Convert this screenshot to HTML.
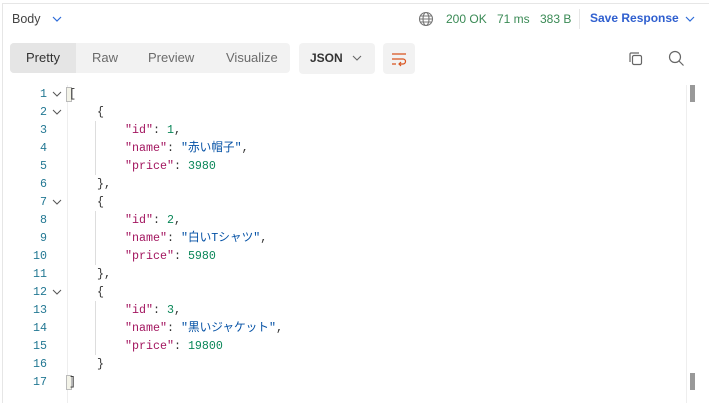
<!DOCTYPE html>
<html style="overflow:hidden"><head><meta charset="utf-8"><style>
html,body{margin:0;width:709px;height:403px;overflow:hidden}
body{background:#fff;font-family:"Liberation Sans","Noto Sans CJK JP",sans-serif;position:relative}
.a{position:absolute}
.frame{left:2px;top:3px;width:707px;height:400px;border-top:1px solid #e6e6e6;border-left:1px solid #e6e6e6;box-sizing:border-box}
.t{font-size:12.5px;white-space:nowrap}
.tabs{left:10px;top:43px;width:280px;height:30px;background:#f2f2f2;border-radius:4px}
.tab{position:absolute;top:0;height:30px;line-height:30px;font-size:13px;color:#6b6b6b}
.code{font-family:"Liberation Mono","Noto Sans CJK JP",monospace;font-size:11.67px;line-height:18px;white-space:pre}
.ln{left:20px;top:85px;width:27px;text-align:right;color:#237893}
.k{color:#a3155f}.s{color:#0451a5}.n{color:#098658}.p{color:#333}
</style></head><body>
<div class="a frame"></div>
<div class="a t" style="left:12px;top:12px;color:#444">Body</div>
<svg class="a" style="left:52px;top:15px" width="10" height="8"><path d="M1 2l4 4 4-4" fill="none" stroke="#2d6bd9" stroke-width="1.2"/></svg>
<svg class="a" style="left:418px;top:11px" width="16" height="16" viewBox="0 0 16 16" fill="none" stroke="#777" stroke-width="1.1"><circle cx="8" cy="8" r="6.5"/><ellipse cx="8" cy="8" rx="3" ry="6.5"/><path d="M1.5 8h13M2.5 5h11M2.5 11h11"/></svg>
<div class="a t" style="left:446px;top:12px;color:#3a8a55;font-size:12px">200 OK</div>
<div class="a t" style="left:497px;top:12px;color:#3a8a55;font-size:12px">71 ms</div>
<div class="a t" style="left:540px;top:12px;color:#3a8a55;font-size:12px">383 B</div>
<div class="a" style="left:579px;top:9px;width:1px;height:20px;background:#e6e6e6"></div>
<div class="a t" style="left:590px;top:11px;color:#2f5fcf;font-weight:bold;font-size:12px">Save Response</div>
<svg class="a" style="left:685px;top:15px" width="10" height="8"><path d="M1 2l4 4 4-4" fill="none" stroke="#2d6bd9" stroke-width="1.2"/></svg>

<div class="a tabs">
<div class="tab" style="left:0;width:66px;background:#e5e5e5;border-radius:4px 0 0 4px;color:#333;text-align:center">Pretty</div>
<div class="tab" style="left:82px">Raw</div>
<div class="tab" style="left:138px">Preview</div>
<div class="tab" style="left:216px">Visualize</div>
</div>
<div class="a" style="left:299px;top:43px;width:76px;height:31px;background:#f2f2f2;border-radius:4px"></div>
<div class="a t" style="left:310px;top:51px;font-weight:bold;color:#333;font-size:12px">JSON</div>
<svg class="a" style="left:352px;top:54px" width="10" height="8"><path d="M1 2l4 4 4-4" fill="none" stroke="#666" stroke-width="1.1"/></svg>
<div class="a" style="left:383px;top:43px;width:32px;height:31px;background:#f2f2f2;border-radius:4px"></div>
<svg class="a" style="left:391px;top:51px" width="16" height="16" fill="none" stroke="#d9531e" stroke-width="1.2"><path d="M1 3h14M1 8h11a2.5 2.5 0 0 1 0 5H8M10 11l-2 2 2 2M1 13h4"/></svg>
<svg class="a" style="left:628px;top:51px" width="16" height="16" fill="none" stroke="#666" stroke-width="1.2"><rect x="4.5" y="4.5" width="9" height="9" rx="1.5"/><path d="M2 11V3a1 1 0 0 1 1-1h8"/></svg>
<svg class="a" style="left:668px;top:50px" width="17" height="17" fill="none" stroke="#666" stroke-width="1.2"><circle cx="7" cy="7" r="5.5"/><path d="M11 11l4.5 4.5"/></svg>

<div class="a" style="left:67px;top:85px;width:1px;height:318px;background:#eee"></div>
<div class="a" style="left:95px;top:121px;width:1px;height:54px;background:#ddd"></div>
<div class="a" style="left:95px;top:211px;width:1px;height:54px;background:#ddd"></div>
<div class="a" style="left:95px;top:301px;width:1px;height:54px;background:#ddd"></div>
<div class="a" style="left:686px;top:85px;width:1px;height:318px;background:#eee"></div>
<div class="a" style="left:690px;top:85px;width:5px;height:17px;background:#999"></div>
<div class="a" style="left:690px;top:373px;width:5px;height:17px;background:#999"></div>
<div class="a" style="left:66px;top:87px;width:6px;height:15px;border:1px solid #bbb;box-sizing:border-box;background:#f3f3e8"></div>
<div class="a" style="left:66px;top:375px;width:6px;height:15px;border:1px solid #bbb;box-sizing:border-box;background:#f3f3e8"></div>

<div class="a code ln">1
2
3
4
5
6
7
8
9
10
11
12
13
14
15
16
17</div>
<svg class="a" style="left:52px;top:85px" width="12" height="306" fill="none" stroke="#555" stroke-width="1"><path d="M1 7l4 4 4-4M1 25l4 4 4-4M1 115l4 4 4-4M1 205l4 4 4-4"/></svg>
<div class="a code p" style="left:69px;top:85px">[
    {
        <span class="k">"id"</span>: <span class="n">1</span>,
        <span class="k">"name"</span>: <span class="s">"赤い帽子"</span>,
        <span class="k">"price"</span>: <span class="n">3980</span>
    },
    {
        <span class="k">"id"</span>: <span class="n">2</span>,
        <span class="k">"name"</span>: <span class="s">"白いTシャツ"</span>,
        <span class="k">"price"</span>: <span class="n">5980</span>
    },
    {
        <span class="k">"id"</span>: <span class="n">3</span>,
        <span class="k">"name"</span>: <span class="s">"黒いジャケット"</span>,
        <span class="k">"price"</span>: <span class="n">19800</span>
    }
]</div>
</body></html>
